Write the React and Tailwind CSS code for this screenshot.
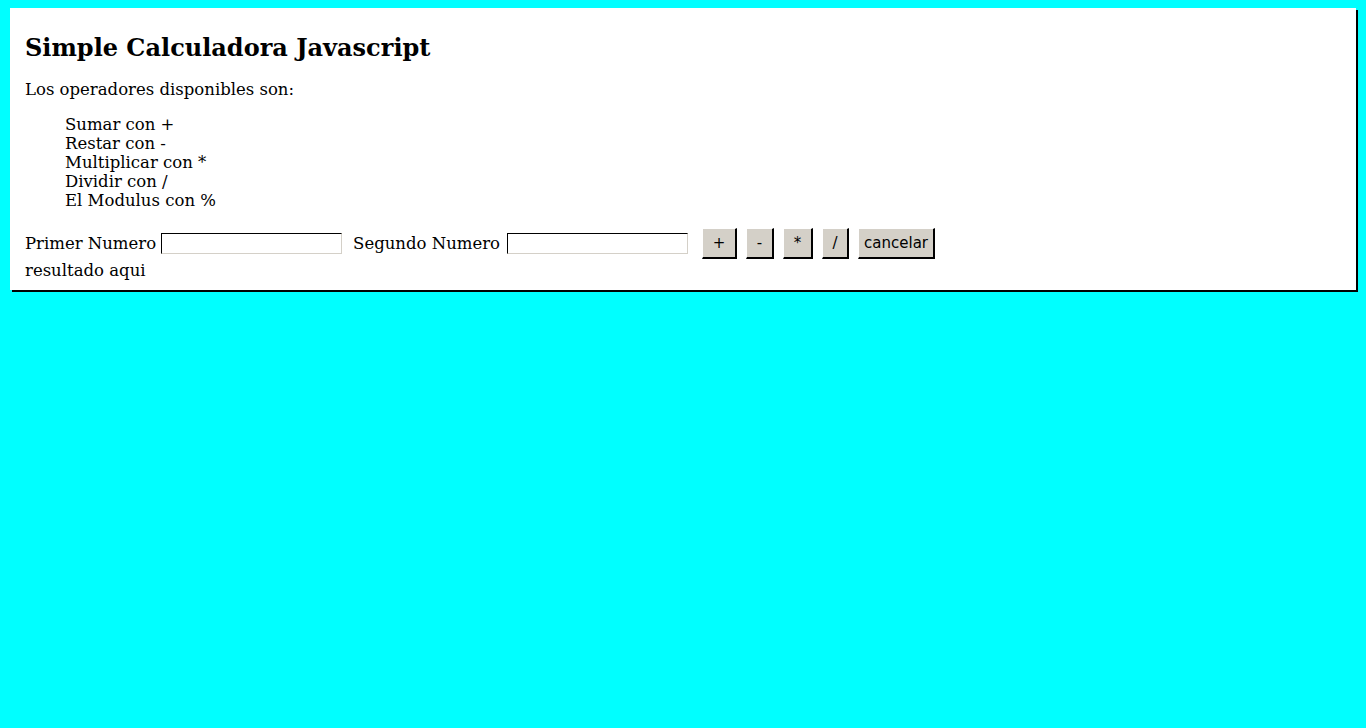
export default function App() {
  const serif = { fontFamily: '"DejaVu Serif", serif' };
  const btn =
    "h-[31px] bg-[#d4d0c8] border-t border-l border-t-white border-l-white border-b-2 border-r-2 border-b-black border-r-black text-[15px] text-black flex items-center justify-center";
  const inp =
    "h-[21px] w-[181px] bg-white border border-t-black border-l-black border-b-[#d4d0c8] border-r-[#d4d0c8]";
  return (
    <div className="min-h-[728px] w-full bg-[#00ffff] pt-2 px-[10px]" style={serif}>
      <div className="bg-white shadow-[2px_2px_0_#000] pt-[26px] pb-[10px] pl-[15px] text-black">
        <h2 className="h-[28px] leading-[28px] text-[24px] font-bold">Simple Calculadora Javascript</h2>
        <p className="mt-[18px] leading-[19px] text-[16.5px]">Los operadores disponibles son:</p>
        <ul className="mt-[16px] pl-[40px] leading-[19px] text-[16.5px]">
          <li>Sumar con +</li>
          <li>Restar con -</li>
          <li>Multiplicar con *</li>
          <li>Dividir con /</li>
          <li>El Modulus con %</li>
        </ul>
        <div className="mt-[18px] flex items-center h-[31px] text-[16.5px]">
          <span className="pt-[2px]">Primer Numero</span>
          <input className={inp + " ml-[5px]"} />
          <span className="ml-[11px] pt-[2px]">Segundo Numero</span>
          <input className={inp + " ml-[7px]"} />
          <div className="ml-[14px] flex gap-[9px]" style={{ fontFamily: '"DejaVu Sans", sans-serif' }}>
            <button className={btn + " w-[35px]"}>+</button>
            <button className={btn + " w-[28px]"}>-</button>
            <button className={btn + " w-[30px]"}>*</button>
            <button className={btn + " w-[27px]"}>/</button>
            <button className={btn + " w-[77px]"}>cancelar</button>
          </div>
        </div>
        <div className="mt-[2px] leading-[19px] text-[16.5px]">resultado aqui</div>
      </div>
    </div>
  );
}
